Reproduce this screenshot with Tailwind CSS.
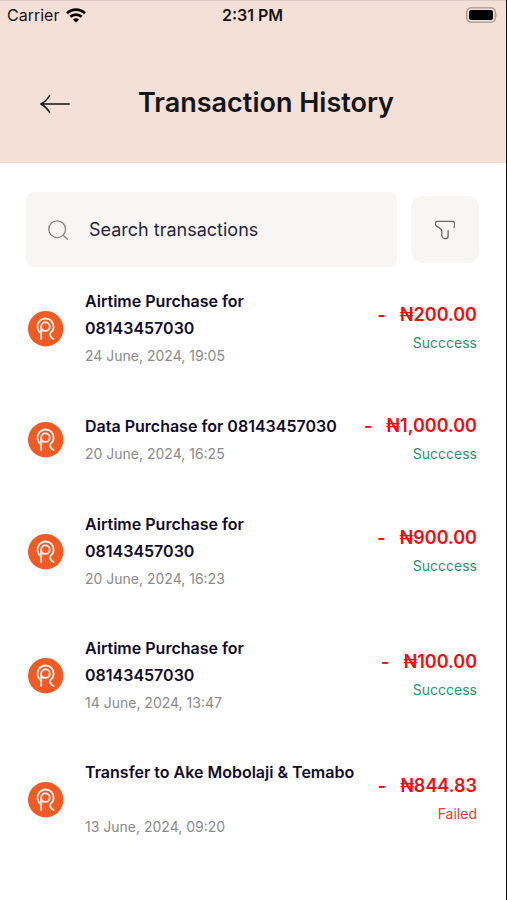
<!DOCTYPE html>
<html lang="en">
<head>
<meta charset="utf-8">
<meta name="viewport" content="width=device-width, initial-scale=1">
<title>Transaction History</title>
<script src="https://cdn.jsdelivr.net/npm/@tailwindcss/browser@4"></script>
</head>
<body class="min-h-screen border-r border-[#111111] bg-white font-['Inter','Noto_Sans',sans-serif]">
<svg class="hidden" aria-hidden="true">
  <symbol id="brand" viewBox="0 0 36 36">
    <circle cx="17.7" cy="17.7" r="17.7" fill="#f15a24"/>
    <g fill="none" stroke="#fff0e4" stroke-width="1.9" stroke-linecap="round" stroke-linejoin="round">
      <path d="M13.2 22.4A8.1 8.1 0 1 1 22.4 22.1C21.6 22.8 21.8 23.8 22.4 24.8L23.6 26.9L25.6 28"/>
      <path d="M13.2 28V15.6A4.3 4.3 0 1 1 17.5 19.9C15.8 19.9 14.2 19.4 13.4 17.6"/>
    </g>
  </symbol>
</svg>
<header class="border-t border-[#dccac4] bg-[#f5e0d8]">
  <div class="grid h-7 grid-cols-3 items-center pr-2 pl-[7px] text-[#171313]">
    <div class="flex items-center gap-[7px] text-base">
      <span>Carrier</span>
      <svg class="h-[15px] w-5" viewBox="0 0 20 15" fill="none" stroke="#080606" stroke-width="2.8" aria-label="Wi-Fi">
        <path d="M1 5.3C6.1.5 13.9.5 19 5.3M4.3 8.8C7.5 5.8 12.5 5.8 15.7 8.8"/>
        <path d="M10 14.5 6.9 11.4C8.7 9.8 11.3 9.8 13.1 11.4Z" fill="#080606" stroke="none"/>
      </svg>
    </div>
    <time class="text-center text-base font-semibold whitespace-nowrap">2:31 PM</time>
    <svg class="h-4 w-8 justify-self-end" viewBox="0 0 32 16" aria-label="Battery full">
      <rect x=".8" y=".8" width="28.4" height="14.4" rx="4" fill="#f5e0d8" stroke="#a3948f" stroke-width="1.3"/>
      <rect x="3" y="3" width="24" height="10" rx="2" fill="#000"/>
      <path d="M30.5 5.5Q32 8 30.5 10.5Z" fill="#a3948f"/>
    </svg>
  </div>
  <div class="flex h-[134px] items-center gap-[68px] px-10 pt-[14px]">
    <button type="button" aria-label="Back" class="shrink-0">
      <svg class="h-6 w-[30px]" viewBox="0 -3 30 24" fill="none" stroke="#171313" stroke-width="1.6" stroke-linecap="round" stroke-linejoin="round"><path d="M29.2 10H1M9.5 1.5C8 4.5 4.5 8 1 10C4.5 12 8 15.5 9.5 18.5"/></svg>
    </button>
    <h1 class="text-[27px] leading-8 font-semibold whitespace-nowrap text-[#141414]">Transaction History</h1>
  </div>
</header>
<main class="pt-[29px] pr-[27px] pb-10 pl-[26px]">
  <form class="flex items-center gap-[14px]">
    <label class="flex h-[75px] min-w-0 flex-1 items-center gap-[21px] rounded-lg bg-[#f7f6f5] pl-[22px]">
      <svg class="h-5 w-5 shrink-0" viewBox="0 0 20 20" fill="none" stroke="#858388" stroke-width="1.3" stroke-linecap="round"><circle cx="9.2" cy="9.2" r="8.4"/><path d="m15.3 15.3 4 4"/></svg>
      <input type="text" aria-label="Search transactions" placeholder="Search transactions" class="min-w-0 flex-1 bg-transparent text-[18px] text-[#28243e] outline-none placeholder:text-[#28243e]">
    </label>
    <button type="button" aria-label="Filter" class="flex h-[67px] w-[68px] items-center justify-center rounded-xl bg-[#f7f6f5]">
      <svg class="h-5 w-5" viewBox="0 0 20 20" fill="none" stroke="#68666a" stroke-width="1.3" stroke-linecap="round" stroke-linejoin="round"><path d="M19 7.5C19.5 6.8 19.6 5.8 19.6 4.5V3.2Q19.6 1.4 17.8 1.4H2.2Q.5 1.4.5 3.2V4.2C.5 7.3 6.8 7.4 6.8 11V15.3C6.8 17.3 8.6 18.7 10.5 18.7Q13.1 18.7 13.1 16V10.4"/></svg>
    </button>
  </form>
  <ul class="flex flex-col gap-[43px] px-[2px] pt-[21px]">
    <li class="flex items-center gap-[21px]">
      <svg class="h-9 w-9 shrink-0" aria-hidden="true"><use href="#brand"/></svg>
      <div class="min-w-0 flex-1 whitespace-nowrap"><h2 class="text-base leading-[27px] font-semibold text-[#100b2b]">Airtime Purchase for<br>08143457030</h2><p class="text-sm leading-[27px] text-[#8b8b8b]">24 June, 2024, 19:05</p></div>
      <div class="text-right"><p class="flex justify-end gap-[14px] text-lg leading-7 font-semibold text-[#f10d0d]"><span>-</span><span>₦200.00</span></p><p class="text-sm leading-7 text-[#27966a]">Succcess</p></div>
    </li>
    <li class="flex items-center gap-[21px]">
      <svg class="h-9 w-9 shrink-0" aria-hidden="true"><use href="#brand"/></svg>
      <div class="min-w-0 flex-1 whitespace-nowrap"><h2 class="text-base leading-[27px] font-semibold text-[#100b2b]">Data Purchase for 08143457030</h2><p class="text-sm leading-[27px] text-[#8b8b8b]">20 June, 2024, 16:25</p></div>
      <div class="text-right"><p class="flex justify-end gap-[14px] text-lg leading-7 font-semibold text-[#f10d0d]"><span>-</span><span>₦1,000.00</span></p><p class="text-sm leading-7 text-[#27966a]">Succcess</p></div>
    </li>
    <li class="flex items-center gap-[21px]">
      <svg class="h-9 w-9 shrink-0" aria-hidden="true"><use href="#brand"/></svg>
      <div class="min-w-0 flex-1 whitespace-nowrap"><h2 class="text-base leading-[27px] font-semibold text-[#100b2b]">Airtime Purchase for<br>08143457030</h2><p class="text-sm leading-[27px] text-[#8b8b8b]">20 June, 2024, 16:23</p></div>
      <div class="text-right"><p class="flex justify-end gap-[14px] text-lg leading-7 font-semibold text-[#f10d0d]"><span>-</span><span>₦900.00</span></p><p class="text-sm leading-7 text-[#27966a]">Succcess</p></div>
    </li>
    <li class="flex items-center gap-[21px]">
      <svg class="h-9 w-9 shrink-0" aria-hidden="true"><use href="#brand"/></svg>
      <div class="min-w-0 flex-1 whitespace-nowrap"><h2 class="text-base leading-[27px] font-semibold text-[#100b2b]">Airtime Purchase for<br>08143457030</h2><p class="text-sm leading-[27px] text-[#8b8b8b]">14 June, 2024, 13:47</p></div>
      <div class="text-right"><p class="flex justify-end gap-[14px] text-lg leading-7 font-semibold text-[#f10d0d]"><span>-</span><span>₦100.00</span></p><p class="text-sm leading-7 text-[#27966a]">Succcess</p></div>
    </li>
    <li class="flex items-center gap-[21px]">
      <svg class="h-9 w-9 shrink-0" aria-hidden="true"><use href="#brand"/></svg>
      <div class="min-w-0 flex-1 whitespace-nowrap"><h2 class="min-h-[54px] text-base leading-[27px] font-semibold text-[#100b2b]">Transfer to Ake Mobolaji &amp; Temabo</h2><p class="text-sm leading-[27px] text-[#8b8b8b]">13 June, 2024, 09:20</p></div>
      <div class="text-right"><p class="flex justify-end gap-[14px] text-lg leading-7 font-semibold text-[#f10d0d]"><span>-</span><span>₦844.83</span></p><p class="text-sm leading-7 text-[#e43b3b]">Failed</p></div>
    </li>
  </ul>
</main>
</body>
</html>
